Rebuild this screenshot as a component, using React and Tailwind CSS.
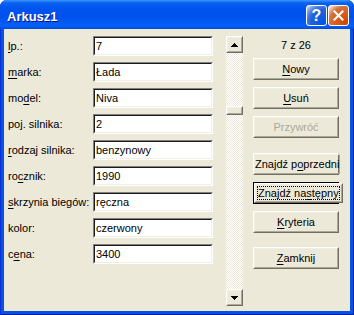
import React from "react";

function Raised({ className = "", children }) {
  return (
    <div className={"flex border border-t-white border-l-white border-r-[#716f64] border-b-[#716f64] bg-[#ece9d8] " + className}>
      <div className="flex flex-1 items-center justify-center border border-t-[#f1efe2] border-l-[#f1efe2] border-r-[#aca899] border-b-[#aca899]">
        {children}
      </div>
    </div>
  );
}

function Btn({ children, disabled, isDefault, className = "" }) {
  const text = (
    <span className={"whitespace-nowrap text-[11px] leading-none " + (disabled ? "text-[#aca899]" : "text-black")}>{children}</span>
  );
  if (isDefault) {
    return (
      <div className={"flex h-[22px] w-[86px] border border-black " + className}>
        <Raised className="flex-1">
          <div className="m-[1px] flex h-[14px] flex-1 items-center justify-center border border-dotted border-black">
            {text}
          </div>
        </Raised>
      </div>
    );
  }
  return <Raised className={"h-[22px] w-[86px] " + className}>{text}</Raised>;
}

function Field({ value }) {
  return (
    <div className="flex h-[20px] w-[120px] border border-t-[#808080] border-l-[#808080] border-r-white border-b-white">
      <div className="flex flex-1 items-center border border-t-[#1a1a1a] border-l-[#1a1a1a] border-r-[#f1efe2] border-b-[#f1efe2] bg-white pl-[1px] text-[11px] leading-none text-black">
        {value}
      </div>
    </div>
  );
}

function U({ children }) {
  return <span className="underline decoration-1 underline-offset-[2px]">{children}</span>;
}

function Arrow({ down }) {
  return (
    <svg width="7" height="4" viewBox="0 0 7 4" shapeRendering="crispEdges" className={down ? "rotate-180" : ""}>
      <path d="M3 0h1v1h1v1h1v1h1v1H0V3h1V2h1V1h1z" fill="#000" />
    </svg>
  );
}

const rows = [
  [<><U>l</U>p.:</>, "7"],
  [<><U>m</U>arka:</>, "Łada"],
  [<>mo<U>d</U>el:</>, "Niva"],
  [<>po<U>j</U>. silnika:</>, "2"],
  [<><U>r</U>odzaj silnika:</>, "benzynowy"],
  [<>ro<U>c</U>znik:</>, "1990"],
  [<><U>s</U>krzynia biegów:</>, "ręczna"],
  [<>kolor:</>, "czerwony"],
  [<>c<U>e</U>na:</>, "3400"],
];

export default function App() {
  return (
    <div className="h-[315px] w-[354px] bg-white font-['Liberation_Sans',Arial,sans-serif]">
      <div className="flex h-[315px] w-[354px] flex-col overflow-hidden rounded-t-[7px] bg-[#0553e2] shadow-[inset_1px_0_#0831d9,inset_-1px_0_#001ea0,inset_0_-1px_#001ea0]">
        {/* title bar */}
        <div className="flex h-[29px] items-start bg-[linear-gradient(180deg,#3d95ff_0%,#0a62f0_10%,#0053ee_30%,#0050ee_60%,#0560f5_88%,#0058ee_94%,#0048dc_100%)] pl-[7px] pr-[5px]">
          <span className="mt-[9px] flex-1 text-[13px] font-bold leading-[15px] text-white [text-shadow:1px_1px_#0f1089]">
            Arkusz1
          </span>
          <div className="mt-[5px] flex gap-[1px]">
            <div className="flex h-[21px] w-[21px] items-center justify-center rounded-[3px] border border-white bg-[radial-gradient(circle_at_90%_90%,#0054e9_0%,#2263d5_55%,#4479e4_70%,#a3bbec_90%,#fff_100%)]">
              <span className="text-[16px] font-bold leading-none text-white">?</span>
            </div>
            <div className="flex h-[21px] w-[21px] items-center justify-center rounded-[3px] border border-white bg-[radial-gradient(circle_at_90%_90%,#cc4600_0%,#dc6527_55%,#cd7546_70%,#ffccb2_90%,#fff_100%)]">
              <svg width="11" height="11" viewBox="0 0 11 11">
                <path d="M1.5 1.5l8 8M9.5 1.5l-8 8" stroke="#fff" strokeWidth="2" strokeLinecap="square" />
              </svg>
            </div>
          </div>
        </div>

        {/* body */}
        <div className="mx-[4px] mb-[4px] flex flex-1 bg-[#ece9d8] pl-[4px] pt-[7px]">
          <div className="flex flex-col gap-[6px]">
            {rows.map(([label, value], i) => (
              <div key={i} className="flex h-[20px] items-center">
                <div className="w-[85px] whitespace-nowrap text-[11px] leading-none text-black">{label}</div>
                <Field value={value} />
              </div>
            ))}
          </div>

          {/* scrollbar */}
          <div className="ml-[13px] flex h-[270px] w-[17px] flex-col">
            <Raised className="h-[17px] w-[17px]">
              <Arrow />
            </Raised>
            <div className="flex flex-1 flex-col bg-[repeating-conic-gradient(#ece9d8_0%_25%,#ffffff_0%_50%)] bg-[length:2px_2px]">
              <div className="h-[53px]" />
              <Raised className="h-[9px] w-[17px]" />
            </div>
            <Raised className="h-[17px] w-[17px]">
              <Arrow down />
            </Raised>
          </div>

          {/* buttons */}
          <div className="ml-[10px] flex w-[86px] flex-col">
            <div className="mb-[4px] flex h-[18px] items-center justify-center text-[11px] leading-none text-black">
              7 z 26
            </div>
            <Btn><U>N</U>owy</Btn>
            <Btn className="mt-[7px]"><U>U</U>suń</Btn>
            <Btn className="mt-[7px]" disabled>Przywróć</Btn>
            <Btn className="mt-[15px]">Znajdź p<U>o</U>przedni</Btn>
            <Btn className="mt-[7px]" isDefault>Znajdź na<U>s</U>tępny</Btn>
            <Btn className="mt-[7px]"><U>K</U>ryteria</Btn>
            <Btn className="mt-[14px]"><U>Z</U>amknij</Btn>
          </div>
        </div>
      </div>
    </div>
  );
}
